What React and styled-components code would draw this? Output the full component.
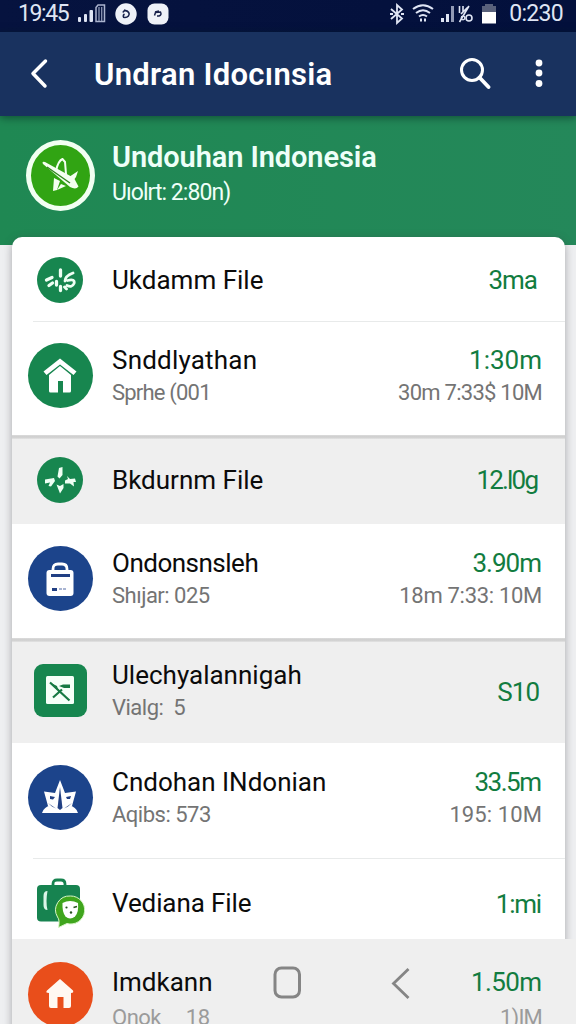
import React from 'react';
import styled, { createGlobalStyle } from 'styled-components';

const GlobalStyle = createGlobalStyle`
  * { box-sizing: border-box; }
  body {
    margin: 0;
    font-family: Roboto, "Liberation Sans", sans-serif;
    background: #eeeff1;
  }
`;

const Screen = styled.div`
  position: relative;
  width: 576px;
  height: 1024px;
  overflow: hidden;
  display: flex;
  flex-direction: column;
  background: #eeeff1;
`;

const StatusBar = styled.div`
  height: 32px;
  flex: none;
  display: flex;
  justify-content: space-between;
  padding: 0 13px 5px 18px;
  background: linear-gradient(90deg, #06133f, #03103c);
  color: #dfe5f4;
  svg { display: block; }
`;

const StatusGroup = styled.div`
  display: flex;
  align-items: center;
  gap: ${(p) => p.$gap}px;
`;

const Clock = styled.span`
  font-size: 23px;
  line-height: 27px;
  letter-spacing: ${(p) => p.$track}px;
  margin-left: ${(p) => p.$left || 0}px;
`;

const AppBar = styled.header`
  position: relative;
  z-index: 1;
  height: 84px;
  flex: none;
  display: flex;
  align-items: center;
  padding: 0 33px 0 30px;
  background: #19325f;
  box-shadow: 0 2px 8px rgba(5, 35, 30, 0.55);
  color: #fff;
  svg { display: block; flex: none; }
`;

const AppTitle = styled.h1`
  flex: 1;
  margin: 1px 0 0 44px;
  font-size: 31px;
  font-weight: 600;
  line-height: 36px;
  letter-spacing: ${(p) => p.$track}px;
  white-space: pre;
`;

const Actions = styled.div`
  display: flex;
  align-items: center;
  gap: 44px;
`;

const Hero = styled.section`
  height: 129px;
  flex: none;
  display: flex;
  align-items: flex-start;
  padding: 24px 26px 0;
  background: linear-gradient(90deg, #1f8853, #24885a);
  color: #eefff8;
`;

const HeroBadge = styled.div`
  width: 69px;
  height: 71px;
  flex: none;
  border: 5px solid #f2fff2;
  border-radius: 50%;
  background: #31a413;
  display: grid;
  place-items: center;
`;

const HeroText = styled.div`
  margin: 0 0 0 17px;
  white-space: pre;
`;

const HeroTitle = styled.div`
  font-size: 29px;
  font-weight: 600;
  line-height: 34px;
  letter-spacing: ${(p) => p.$track}px;
`;

const HeroSub = styled.div`
  margin-top: 5px;
  font-size: 23px;
  line-height: 28px;
  letter-spacing: ${(p) => p.$track}px;
`;

const Card = styled.main`
  position: relative;
  width: 553px;
  margin: -8px 0 0 12px;
  flex: none;
  display: flex;
  flex-direction: column;
  border-radius: 10px 10px 0 0;
  background: #fff;
  box-shadow: 0 2px 9px rgba(60, 60, 65, 0.4);
`;

const Row = styled.div`
  height: ${(p) => p.$height}px;
  width: ${(p) => (p.$wide ? 564 : 553)}px;
  flex: none;
  display: flex;
  align-items: center;
  padding: ${(p) => p.$push || 0}px ${(p) => p.$end || 23}px ${(p) => p.$lift || 0}px 0;
  background: ${(p) => (p.$tinted ? '#efefef' : 'transparent')};
`;

const Thin = styled.div`
  height: 1px;
  margin-left: 21px;
  background: #e8eaea;
`;

const Thick = styled.div`
  height: 4px;
  background: linear-gradient(#dcdcdc, #cdcdcd 50%, #e4e4e4);
`;

const IconCell = styled.div`
  width: 96px;
  flex: none;
  display: grid;
  place-items: center;
  margin-right: 4px;
`;

const Disc = styled.div`
  width: ${(p) => p.$size}px;
  height: ${(p) => p.$size}px;
  border-radius: ${(p) => p.$radius || '50%'};
  background: ${(p) => p.$color};
  display: grid;
  place-items: center;
  svg { display: block; }
`;

const Column = styled.div`
  display: flex;
  flex-direction: column;
  gap: ${(p) => p.$gap || 5}px;
  align-items: ${(p) => (p.$right ? 'flex-end' : 'flex-start')};
  ${(p) => p.$right && 'margin-left: auto;'}
  padding-top: ${(p) => p.$drop || 0}px;
`;

const Name = styled.div`
  font-size: 26px;
  line-height: 30px;
  color: #0b0b0b;
  white-space: pre;
  letter-spacing: ${(p) => p.$track || 0}px;
`;

const Amount = styled(Name)`
  color: #127c40;
  margin-right: ${(p) => -(p.$track || 0)}px;
`;

const Detail = styled.div`
  font-size: 22px;
  line-height: 26px;
  color: ${(p) => (p.$faded ? '#9b9b9b' : '#747474')};
  white-space: pre;
  letter-spacing: ${(p) => p.$track || 0}px;
`;

const NavOverlay = styled.nav`
  position: absolute;
  left: 273px;
  top: 965px;
  display: flex;
  align-items: center;
  gap: 90px;
  svg { display: block; }
`;

const BackIcon = () => (
  <svg width="20" height="32" viewBox="0 0 20 32" fill="none" stroke="#fff" strokeWidth="3.5">
    <path d="M15.500 3 3 15.500 15 28" strokeLinejoin="round" strokeLinecap="round" />
  </svg>
);

const SearchIcon = () => (
  <svg width="32" height="32" viewBox="0 0 32 32" fill="none" stroke="#fff" strokeWidth="3">
    <circle cx="13" cy="12" r="10.500" />
    <path d="M20.500 19.500 29.500 29" strokeWidth="3.8" strokeLinecap="round" />
  </svg>
);

const MoreIcon = () => (
  <svg width="8" height="30" viewBox="0 0 8 30" fill="#fff">
    <circle cx="4" cy="4" r="3.4" />
    <circle cx="4" cy="14" r="3.4" />
    <circle cx="4" cy="24.5" r="3.4" />
  </svg>
);

const SignalIcon = () => (
  <svg width="28" height="19" viewBox="0 0 28 19" fill="#dfe5f4">
    <rect x="0" y="13" width="3" height="5" rx="1" />
    <rect x="6" y="10" width="3" height="8" rx="1" />
    <rect x="11.5" y="6" width="3.5" height="12" rx="1" />
    <path d="M18 3.500 20 1H26.500V17.500H18Z" fill="none" stroke="#aab3ce" strokeWidth="1.500" />
    <path d="M21 3V17M23.700 3V17" stroke="#8d97b5" strokeWidth="1.300" />
  </svg>
);

const RoundBadgeIcon = () => (
  <svg width="22" height="22" viewBox="0 0 22 22">
    <circle cx="11" cy="11" r="10.700" fill="#eef1f8" />
    <path d="M8 9.500C8.500 7 12 7 13.700 9.500S12.500 14.500 10 14.500 8 12 9.500 11M9 7 12 8" fill="none" stroke="#17204a" strokeWidth="1.600" />
  </svg>
);

const SquareBadgeIcon = () => (
  <svg width="22" height="22" viewBox="0 0 22 22">
    <rect x=".5" y=".5" width="21" height="21" rx="7" fill="#eef1f8" />
    <path d="M7.500 12.500 8.500 9.500 13.500 9Q15 12 12 13L10 13M8 9 12 8" fill="none" stroke="#17204a" strokeWidth="1.500" />
  </svg>
);

const BluetoothIcon = () => (
  <svg width="16" height="22" viewBox="0 0 16 22" fill="none" stroke="#dfe5f4" strokeWidth="1.800">
    <path d="M2 6 13 15.500 8 20V2L13 6.500 2 16M1 11H4M12 11H15" />
  </svg>
);

const WifiIcon = () => (
  <svg width="22" height="19" viewBox="0 0 22 19" fill="none" stroke="#dfe5f4" strokeWidth="2">
    <path d="M1 5Q11-2.500 21 5M4 9Q11 3.500 18 9M7 12.500Q11 9.500 15 12.500" />
    <path d="M8 16H10M12 16H14" strokeWidth="3" />
  </svg>
);

const CellIcon = () => (
  <svg width="33" height="19" viewBox="0 0 33 19" fill="#dfe5f4">
    <rect x="0" y="14" width="3" height="4" />
    <rect x="5" y="10" width="3" height="8" />
    <rect x="10" y="2" width="3" height="16" opacity=".65" />
    <path d="M18.500 2V9M20 10 27 3M18.500 18 28 2M22 2V8" stroke="#dfe5f4" strokeWidth="1.600" />
    <circle cx="28" cy="14" r="3" fill="none" stroke="#dfe5f4" strokeWidth="1.600" />
    <circle cx="22" cy="14" r="1.800" fill="none" stroke="#dfe5f4" strokeWidth="1.300" />
  </svg>
);

const BatteryIcon = () => (
  <svg width="16" height="20" viewBox="0 0 16 20">
    <path d="M4 0H12V2H15V8H1V2H4Z" fill="#59617b" />
    <rect x="1" y="8" width="14" height="11.500" fill="#fff" />
  </svg>
);

const PlaneIcon = () => (
  <svg width="38" height="36" viewBox="0 0 38 36" fill="#f4fff0">
    <path d="M1 6Q-.5 3 3 4L32 20 36.500 28.500Q34 32 28 29Z" />
    <path d="M14 13Q16 3 20.500 1L23 4 24 16" fill="none" stroke="#f4fff0" strokeWidth="2" />
    <path d="M27 19 36 13 34 19 31 23ZM12 20 18 23 15 32 11 33Z" />
    <path d="M19 26 24 28 15 32" />
    <path d="M5 9 28 25" stroke="#31851f" strokeWidth="1.500" />
  </svg>
);

const PetalIcon = () => (
  <svg width="32" height="26" viewBox="0 0 32 26" fill="none" stroke="#effff4" strokeWidth="3.300" strokeLinecap="round">
    <path d="M16.500 3V9M2.500 13 8 10.500M5 18.500 8.500 16M12.500 14.500V18M16.500 19.500V23.500" />
    <path d="M29 6Q21 9 21 14M23.500 13.500Q31.500 11.500 30 16.500Q28 21 23 18.500M20.500 20 22.500 22" strokeWidth="2.800" />
  </svg>
);

const SparkIcon = () => (
  <svg width="32" height="28" viewBox="0 0 32 28" fill="#effff4">
    <path d="M15 2 18.500 1 18.500 9 15.500 12.500 13.500 10.500ZM1 13.500 10 12 11 15 7 20.500 4.500 20 6 16.500 1 17.500ZM21 14.500 24 13 23 10 26 13 31 12.500 32 16 29.500 16 30 20.500 26 17.500 21 17.500ZM12.500 18.500 16 20 19.500 18 19.500 22 16 27.500Z" />
  </svg>
);

const HomeIcon = () => (
  <svg width="34" height="36" viewBox="0 0 34 36" fill="#fff">
    <path d="M.500 13.500 17 .500 33.500 13.500 30.500 17 17 6.500 3.500 17Z" />
    <path d="M6 17 17 8 28 17V33Q28 34.500 26.500 34.500H20V23H15V34.500H7.500Q6 34.500 6 33Z" />
  </svg>
);

const SmallHomeIcon = () => (
  <svg width="30" height="32" viewBox="0 0 30 32" fill="#fff8f2">
    <path d="M15 1 28 12.500Q29 15 26 15V28Q26 30 24 30H18.500V19H12.500V30H6Q4 30 4 28V15Q0 15 2 12.500Z" />
  </svg>
);

const BagIcon = () => (
  <svg width="30" height="36" viewBox="0 0 30 36">
    <path d="M8 11V8Q8 3 13 3H17Q22 3 22 8V11" fill="none" stroke="#fff" strokeWidth="2.800" />
    <rect x="1.500" y="9" width="27" height="26" rx="3" fill="#fff" />
    <path d="M6 14.500H25" stroke="#213f83" strokeWidth="3" />
    <path d="M7 28.500H12" stroke="#213f83" strokeWidth="3" />
    <path d="M14 28H22" stroke="#8c9cc4" strokeWidth="1.600" strokeDasharray="3 1" />
  </svg>
);

const SheetIcon = () => (
  <svg width="28" height="28" viewBox="0 0 28 28">
    <rect width="28" height="28" rx="1.500" fill="#f5fff8" />
    <path d="M4 6.500 23.500 24.500M16 13.500 7 21.500" fill="none" stroke="#167943" strokeWidth="2.200" />
    <path d="M4 6.500 11 10 12.500 15ZM13 10 17 8.500H24V12H18Z" fill="#167943" />
  </svg>
);

const StarBoatIcon = () => (
  <svg width="38" height="36" viewBox="0 0 38 36">
    <path d="M19 1 24 14 35 12.500 31 27Q25 30 19 31 13 30 7 27L3 12.500 14 14Z" fill="#fff" />
    <path d="M1 34Q3 27.500 10 26.500H28Q35 27.500 37 34Z" fill="#fff" />
    <path d="M19 8 21.500 29 19 31 16.500 29Z" fill="#213f83" />
    <path d="M9 17 14 18 12 20.500 9 20ZM25 18 30 17 29 20 26 20ZM7 24 15 29.500 11 27.500ZM31 24 23 29.500 27 27.500Z" fill="#213f83" />
  </svg>
);

const CaseIcon = () => (
  <svg width="50" height="50" viewBox="0 0 50 50">
    <path d="M18 8V6Q18 2 22 2H26Q30 2 30 6V8" fill="none" stroke="#17834f" strokeWidth="2.800" />
    <rect x="2" y="7" width="43" height="36.500" rx="4" fill="#178350" />
    <path d="M12.500 13Q8.500 13 8.500 18V27Q8.500 32 12.500 32Q10.500 24 12.500 13Z" fill="#dcf5e8" />
    <path d="M35.500 18A14 14 0 0 0 22.500 39Q25 42 23.500 49.500L32 45.500A14 14 0 1 0 35.500 18Z" fill="#3fa51d" stroke="#d9f6c9" strokeWidth="1" />
    <path d="M27.500 25Q35 21 43 25Q44 34 40 38.500 35 42.500 30.500 38.500 27 34 27.500 25Z" fill="#fff" />
    <circle cx="31.500" cy="29.500" r="1.100" fill="#27531f" />
    <path d="M38.500 29.500 42 28.500" stroke="#27531f" strokeWidth="1.500" />
    <circle cx="36" cy="34.500" r="1.200" fill="#27531f" />
  </svg>
);

const HomeKey = () => (
  <svg width="28" height="33" viewBox="0 0 28 33" fill="none" stroke="#858585" strokeWidth="3">
    <rect x="2" y="2" width="24.500" height="29" rx="6.500" />
  </svg>
);

const BackKey = () => (
  <svg width="21" height="34" viewBox="0 0 21 34" fill="none" stroke="#858585" strokeWidth="2.800">
    <path d="M17.500 4 2.500 18.500 17.500 33" />
  </svg>
);

const green = '#17864f';
const blue = '#1c448b';

const items = [
  { height: 84, push: 1, icon: <Disc $size={46} $color={green}><PetalIcon /></Disc>, name: 'Ukdamm File', amount: '3ma', amountTrack: -1, end: 27 },
  { rule: 'thin' },
  { height: 113, lift: 6, icon: <Disc $size={65} $color={green}><HomeIcon /></Disc>, name: 'Snddlyathan', nameTrack: 0.2, detail: 'Sprhe (001', detailTrack: -0.8, amount: '1:30m', note: '30m 7:33$ 10M', noteTrack: -0.75 },
  { rule: 'thick' },
  { height: 85, lift: 4, tinted: true, icon: <Disc $size={46} $color={green}><SparkIcon /></Disc>, name: 'Bkdurnm File', amount: '12.l0g', amountTrack: -1.8, end: 26 },
  { height: 114, lift: 5, icon: <Disc $size={65} $color={blue}><BagIcon /></Disc>, name: 'Ondonsnsleh', nameTrack: -0.5, detail: 'Shıjar: 025', amount: '3.90m', amountTrack: -1, note: '18m 7:33: 10M', noteTrack: -0.3 },
  { rule: 'thick' },
  { height: 101, lift: 5, tinted: true, icon: <Disc $size={53} $radius="9px" $color={green}><SheetIcon /></Disc>, name: 'Ulechyalannigah', detail: 'Vialg:  5', amount: 'S10', amountTrack: -1, amountDrop: 3, end: 25 },
  { height: 115, lift: 7, icon: <Disc $size={65} $color={blue}><StarBoatIcon /></Disc>, name: 'Cndohan INdonian', detail: 'Aqibs: 573', amount: '33.5m', amountTrack: -1.5, note: '195: 10M', noteTrack: 0.1 },
  { rule: 'thin' },
  { height: 80, push: 7, icon: <CaseIcon />, name: 'Vediana File', nameTrack: -0.1, amount: '1:mi', amountTrack: -1.3, amountDrop: 3 },
  { height: 110, tinted: true, wide: true, end: 34, gap: 8, drop: 10, icon: <Disc $size={65} $color="#e94e1b"><SmallHomeIcon /></Disc>, name: 'Imdkann', detail: 'Onok     18', amount: '1.50m', amountTrack: -0.6, amountDrop: 10, note: '1)IM', noteTrack: -0.8, faded: true },
];

function ListItem({ item }) {
  if (item.rule) return item.rule === 'thin' ? <Thin /> : <Thick />;
  return (
    <Row $height={item.height} $push={item.push} $lift={item.lift} $tinted={item.tinted} $wide={item.wide} $end={item.end}>
      <IconCell>{item.icon}</IconCell>
      <Column $gap={item.gap} $drop={item.drop}>
        <Name $track={item.nameTrack}>{item.name}</Name>
        {item.detail && <Detail $track={item.detailTrack ?? -0.5} $faded={item.faded}>{item.detail}</Detail>}
      </Column>
      <Column $right $gap={item.gap} $drop={item.amountDrop}>
        <Amount $track={item.amountTrack}>{item.amount}</Amount>
        {item.note && <Detail $track={item.noteTrack ?? -0.6} $faded={item.faded}>{item.note}</Detail>}
      </Column>
    </Row>
  );
}

export default function App() {
  return (
    <Screen>
      <GlobalStyle />
      <StatusBar>
        <StatusGroup $gap={9.5}>
          <Clock $track={-1.4}>19:45</Clock>
          <SignalIcon />
          <RoundBadgeIcon />
          <SquareBadgeIcon />
        </StatusGroup>
        <StatusGroup $gap={7}>
          <BluetoothIcon />
          <WifiIcon />
          <CellIcon />
          <BatteryIcon />
          <Clock $track={-0.7} $left={5}>0:230</Clock>
        </StatusGroup>
      </StatusBar>
      <AppBar>
        <BackIcon />
        <AppTitle $track={0.3}>Undran Idocınsia</AppTitle>
        <Actions>
          <SearchIcon />
          <MoreIcon />
        </Actions>
      </AppBar>
      <Hero>
        <HeroBadge><PlaneIcon /></HeroBadge>
        <HeroText>
          <HeroTitle $track={-0.1}>Undouhan Indonesia</HeroTitle>
          <HeroSub $track={-0.95}>Uıolrt: 2:80n)</HeroSub>
        </HeroText>
      </Hero>
      <Card>
        {items.map((item, i) => <ListItem key={i} item={item} />)}
      </Card>
      <NavOverlay>
        <HomeKey />
        <BackKey />
      </NavOverlay>
    </Screen>
  );
}
